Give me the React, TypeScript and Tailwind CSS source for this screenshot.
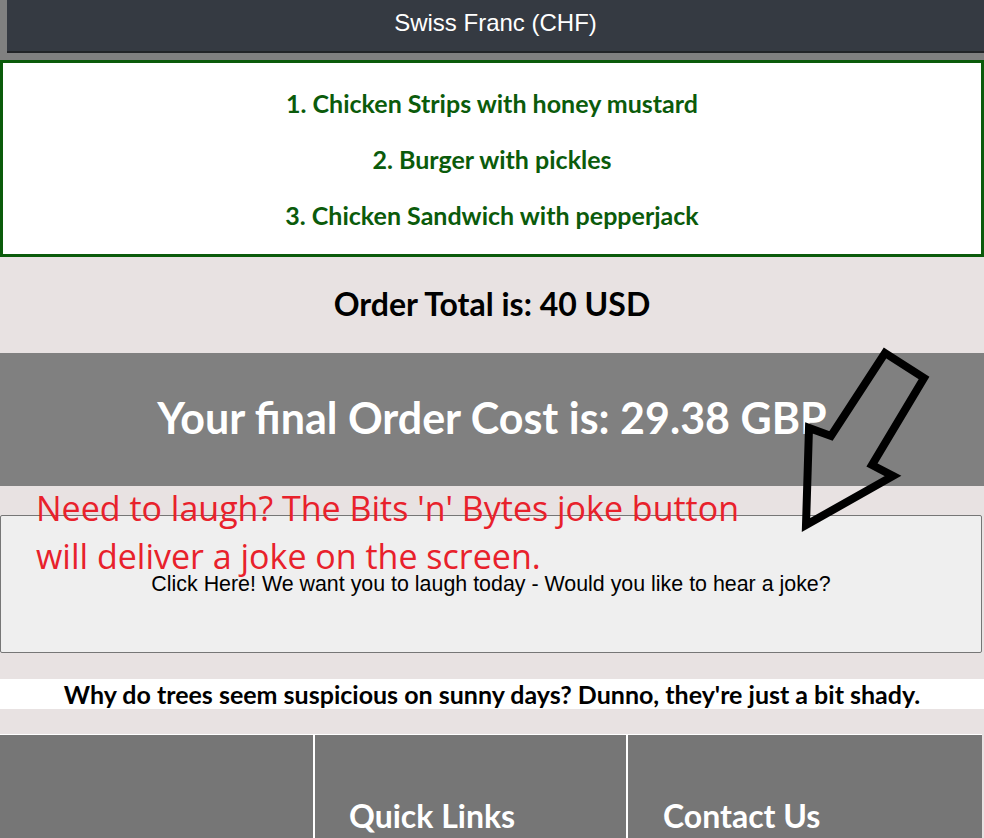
import React from "react";

const items = [
  "1. Chicken Strips with honey mustard",
  "2. Burger with pickles",
  "3. Chicken Sandwich with pepperjack",
];

function Arrow() {
  return (
    <svg
      className="pointer-events-none absolute left-0 top-0"
      width={984}
      height={838}
      viewBox="0 0 984 838"
    >
      <polygon
        points="885,353 924,378 872,465 893,476 806,525 809,428 831,436"
        fill="none"
        stroke="#000"
        strokeWidth={8}
        strokeLinejoin="miter"
      />
    </svg>
  );
}

export default function App() {
  return (
    <div className="relative min-h-[838px] w-[984px] overflow-hidden bg-[#e8e2e2] font-['Lato',sans-serif]">
      <div className="bg-[#808080] pb-[7px] pl-[7px]">
        <div className="flex h-[53px] items-center justify-center border-b-2 border-[#222427] bg-[#353a42] pb-[6px] font-['Liberation_Sans',Arial,sans-serif] text-[24px] text-white">
          Swiss Franc (CHF)
        </div>
      </div>

      <div className="flex flex-col items-center gap-[25px] border-[3px] border-[#0b5b0b] bg-white pb-[23px] pt-[25px]">
        {items.map((it) => (
          <p key={it} className="text-[25px] font-bold leading-[31px] text-[#0b5b0b]">
            {it}
          </p>
        ))}
      </div>

      <div className="flex h-[96px] items-center justify-center pb-[3px]">
        <h2 className="text-[32px] font-bold leading-[40px] text-black">Order Total is: 40 USD</h2>
      </div>

      <div className="flex h-[133px] items-center justify-center bg-[#808080] pb-[4px]">
        <h1 className="text-[43px] font-bold leading-[52px] text-white">Your final Order Cost is: 29.38 GBP</h1>
      </div>

      <div className="pt-[29px]">
        <button
          type="button"
          className="flex h-[138px] w-[982px] items-center justify-center rounded-[2px] border border-[#767676] bg-[#efefef] font-['Liberation_Sans',Arial,sans-serif] text-[21.4px] text-black"
        >
          Click Here! We want you to laugh today - Would you like to hear a joke?
        </button>
      </div>

      <div className="mt-[26px] flex h-[30px] items-center justify-center bg-white">
        <p className="text-[25px] font-bold leading-[30px] text-black">
          Why do trees seem suspicious on sunny days? Dunno, they're just a bit shady.
        </p>
      </div>

      <div className="mt-[25px] grid h-[120px] w-[982px] grid-cols-[313px_2px_311px_2px_354px] border-t border-white bg-[#767676]">
        <div />
        <div className="bg-white" />
        <div className="pl-[34px] pt-[61px]">
          <h3 className="text-[32px] font-bold leading-[40px] text-white">Quick Links</h3>
        </div>
        <div className="bg-white" />
        <div className="pl-[35px] pt-[61px]">
          <h3 className="text-[32px] font-bold leading-[40px] text-white">Contact Us</h3>
        </div>
      </div>

      <div className="pointer-events-none absolute left-[36px] top-[484px] font-['Open_Sans',sans-serif] text-[34px] leading-[48px] text-[#e8212b]">
        <p>Need to laugh? The Bits 'n' Bytes joke button</p>
        <p>will deliver a joke on the screen.</p>
      </div>

      <Arrow />
    </div>
  );
}
